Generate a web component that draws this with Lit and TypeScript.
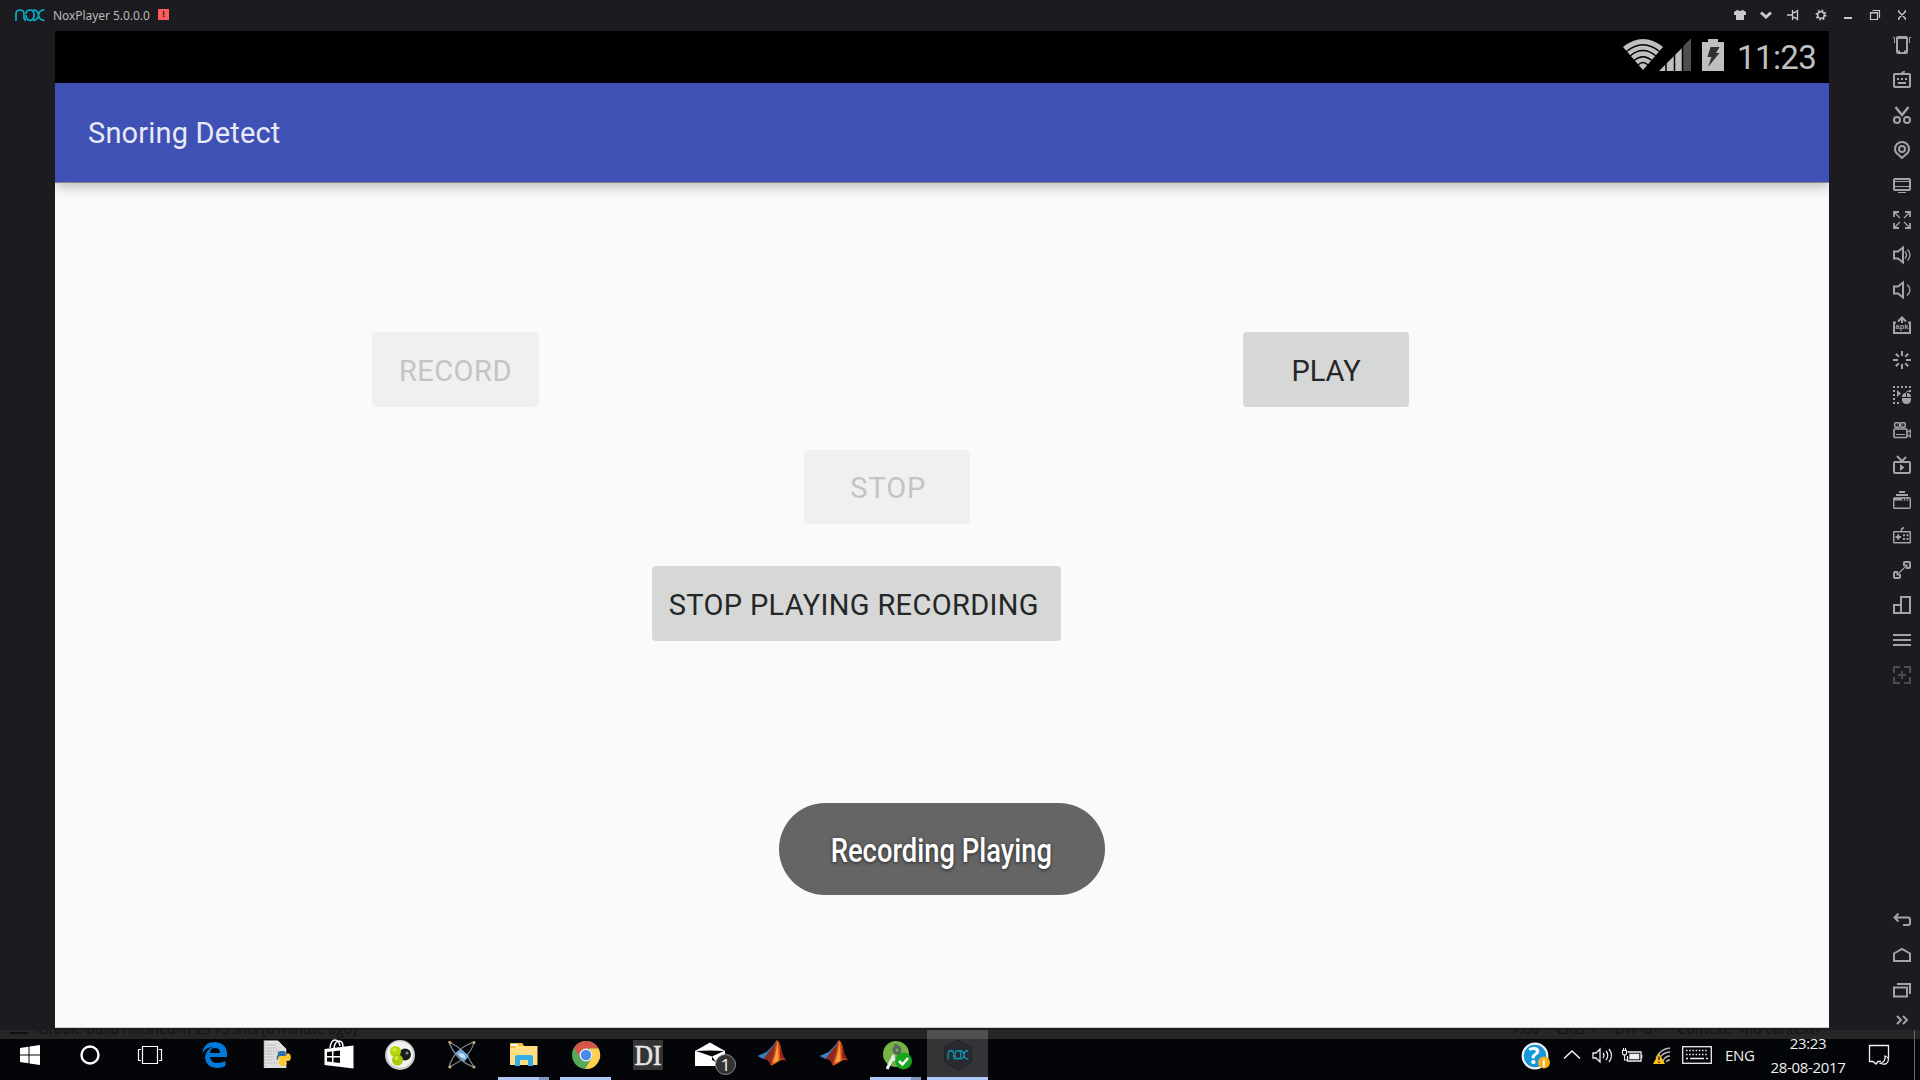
import { LitElement, html, css, svg } from "lit";
import { customElement } from "lit/decorators.js";

const noxMark = svg`<path d="M1 12V5Q1 1 5 1Q9 1 9 5V8Q9 11 11 11.2M11 5Q11 1 15 1Q19 1 19 6Q19 11.3 15 11.3Q11 11.3 11 6M18 1Q23 1 23.5 6Q24 11.3 29.5 11.3M29.5 1Q24 1 23.5 6Q23 11.3 18 11.3" fill="none" stroke-width="1.7"/>`;

const S = (body: unknown, w = 18, h = 18, cls = "") =>
  html`<svg class=${cls} width=${w} height=${h} viewBox="0 0 ${w} ${h}">${body}</svg>`;

const windowIcons = [
  svg`<path d="M3 6L6.5 3.8Q9 6.2 11.5 3.8L15 6V9H13V14H5V9H3Z" class="f"/>`,
  svg`<path d="M3 6.500L8 11L13 6.500" stroke-width="3"/>`,
  svg`<path d="M2 9H7M7.500 4V14M8 6.500H10L12.500 4.500V13.500L10 11.500H8" stroke-width="1.300"/>`,
  svg`<circle cx="9" cy="9" r="3.3" stroke-width="1.5"/><circle cx="9" cy="9" r="4.6" stroke-width="1.8" stroke-dasharray="1.6 2.01"/>`,
  svg`<path d="M5 12H13" stroke-width="2"/>`,
  svg`<path d="M4.5 7H11.5V13.5H4.5ZM4 6.5H12M6.500 4.500H13.500V12" stroke-width="1.2"/>`,
  svg`<path d="M5.500 5.500L12.500 12.500M12.500 5.500L5.500 12.500M5 5H6.500M5 13H6.500M11.500 5H13M11.500 13H13" stroke-width="1.4"/>`,
];

const speaker = svg`<path d="M1 5.500H5L10 1.500V16.500L5 12.500H1Z"/>`;

const sideIcons = [
  svg`<rect x="4" y="1" width="10" height="16" rx="1"/><path d="M4 2H14M4 15.500H7M11 15.500H14"/><path d="M0 1.500H1.500V7M18 1.500H16.500V7" stroke-width="1"/>`,
  svg`<rect x="1" y="3" width="16" height="13" rx="1"/><path d="M4 8H6M8 8H10M12 8H14M5 12H13"/><path d="M9 3V1.500L12 .5" stroke-width="1.500"/>`,
  svg`<path d="M2.500 1L9 9L15.500 1" stroke-width="2.400"/><circle cx="4" cy="14" r="3"/><circle cx="14" cy="14" r="3"/>`,
  svg`<path d="M9 17L5.500 13.700Q2 11.600 2 8A7 7 0 0 1 16 8Q16 11.600 12.500 13.700Z"/><circle cx="9" cy="8" r="3"/>`,
  svg`<rect x="1" y="3" width="16" height="11" rx="1"/><path d="M1 5.500H17M1 10.500H17M5 16.500H13" stroke-width="1"/>`,
  svg`<path d="M1 6V1H6M12 1H17V6M17 12V17H12M6 17H1V12" stroke-width="1.800"/><path d="M1 1L7 7M17 1L11 7M17 17L11 11M1 17L7 11" stroke-width="1.300"/>`,
  svg`${speaker}<path d="M12 5.500Q15 9 12 12.500M14.500 3.500Q19.500 9 14.500 14.500" stroke-width="1.300"/>`,
  svg`${speaker}<path d="M14 3.500Q20 9 14 14.500" stroke-width="1.300"/>`,
  svg`<path d="M3 6.500H1V17H17V6.500H15"/><path d="M9 7V1.500M5 5.500L9 1.500L13 5.500"/><text x="9" y="13" text-anchor="middle" class="apk">apk</text>`,
  svg`<path d="M9 0V5M9 13V18M0 9H5M13 9H18M2.800 2.800L5.800 5.800M12.200 12.200L15.200 15.200M15.200 2.800L12.200 5.800M5.800 12.200L2.800 15.200"/>`,
  svg`<path d="M0 1H18" stroke-dasharray="2 2"/><path d="M1 4V18M17 4V6" stroke-dasharray="2 2"/><path d="M4 17H6" /><path class="f" d="M4 4L8 7.500L4 11ZM9 11Q9 7 13 7V11ZM14 11V7Q18 7 18 11ZM9 12H18V14Q17.500 18 13.500 18T9 14Z"/><path d="M13 7Q13 5.500 16 5" stroke-width="1"/>`,
  svg`<rect x="1.700" y="1.700" width="5" height="4.500" rx="1" stroke-width="1.500"/><rect x="7.700" y="1.700" width="4.500" height="4.500" rx="1" stroke-width="1.500"/><rect x="1" y="8" width="13" height="8.500" rx="1" stroke-width="1.700"/><path d="M4 4H5M9.500 4H10.500M3 13.500H12M15 11L17.300 9V16L15 14" stroke-width="1.200"/>`,
  svg`<rect x="1" y="6" width="16" height="11" rx="1"/><path d="M4 0L9 5L13 1"/><path class="f" d="M7 8L11.500 11.500L7 15Z"/>`,
  svg`<path d="M6 1H12M3 4H15"/><rect x=".7" y="7" width="16.600" height="10.300" rx="1" stroke-width="1.400"/><path d="M1 8H17" stroke-width="3"/><path d="M9 8.500H11M12 8.500H14M15 8.500H16.500" class="cut" stroke-width="1.500"/>`,
  svg`<rect x=".7" y="5.700" width="16.600" height="11" rx=".5" stroke-width="1.500"/><path d="M8.500 5V3L11 1.500" stroke-width="1.500"/><path d="M2.500 11H8M5.200 8.200V13.800M10 9.200H12M13.500 9.200H15.500M10 13H12M13.500 13H15.500"/>`,
  svg`<path d="M11 5V1.500Q11 1 12 1H16Q17 1 17 2V6Q17 7 16 7H13M7 13V16Q7 17 6 17H2Q1 17 1 16V12Q1 11 2 11H5"/><path d="M4 14L14 4M10.500 4H14V7.500M4 10.500V14H7.500" stroke-width="1.200"/>`,
  svg`<path d="M8 17V1H17V17H1V9H8"/>`,
  svg`<path d="M0 4H18M0 9H18M0 14H18"/>`,
  svg`<path d="M1 7V1H7M11 1H17V7M17 11V17H11M7 17H1V11M9 5V13M5 9H13" class="dim"/>`,
];

const navIcons = [
  svg`<path d="M5.500 2.500L1.500 6.500L5.500 10.500M1 6.500H15Q17 6.500 17 8.500V12Q17 14 15 14H10"/>`,
  svg`<path d="M1 7.500V15H17V7.500L9 3Z"/>`,
  svg`<path d="M1 6.500H14V15.500H1ZM4 3H17V13"/>`,
];

const python = svg`<path d="M3 2H17L25 10V29H3Z" fill="#dedede"/><path d="M3 2H17L25 10V29" fill="none" stroke="#f6f6f6"/><path d="M6 6H14M6 9H16M6 12H18M6 15H13M6 18H13M6 21H13M6 24H16M4 2V29" stroke="#b4b4b4" stroke-dasharray="2 1"/><path d="M17 19V14Q17 12 20 12H23Q25 12 25 14V18H20Q17 18 17 21H16Q15 16 18 16H22" fill="#2f6fa8"/><path d="M17 20Q17 17 20 17H24Q26 17 26 14.500H28Q30 15 30 18.500Q30 22 27 22H24V23.500H26V25Q25 27 22 27T18 25V22Q18 20 21 20" fill="#fbc92d"/>`;
const matlab = svg`<g transform="translate(1.500 0)"><path d="M0 17L9 13L14 8Q17 5 19 1L17 20L11 17L6 20Z" fill="#3a7fc0"/><path d="M6 20L14 9Q18 6 19 1L21 12L13 26Q11 20 6 20Z" fill="#8c2c20"/><path d="M13 27Q17 15 19 1Q22 1 24 11T30 23Q26 19 22 22T13 27Z" fill="#d9501e"/><path d="M15 24Q19 15 20 2Q21 10 21 22Z" fill="#f9a23b"/><path d="M22 4Q24 15 29 22Q25 18 23 20Z" fill="#8b2119"/></g>`;

const apps = [
  { icon: svg`<path d="M4.500 15Q5 3 17 3Q29 4 29 15V18H12Q13 24 19 24Q24 24 27.500 22V27Q23 29.500 18 29Q8 28 7 19Q7 11 15 8Q7 8 4.500 15ZM12 14H22Q22 9 17 9T12 14Z" fill="#0279d8" fill-rule="evenodd"/>` },
  { icon: svg`<g transform="translate(.8 0)">${python}</g>` },
  { icon: svg`<path d="M2.500 10L31.500 6.500V29.500L2.500 26Z" fill="#fff"/><path d="M8 9Q9 1 13 1Q17 1 18 7M12 9Q13 2 17 2T21 8" fill="none" stroke="#fff" stroke-width="1.500"/><path d="M5 13L10 12.500V17H5ZM11.500 12.300L18 11.500V17H11.500ZM5 18.500H10V23L5 22.500ZM11.500 18.500H18V24L11.500 23.200Z" fill="#05070b"/>` },
  { icon: svg`<circle cx="16" cy="16" r="15" fill="#c9cac8"/><circle cx="16" cy="15.500" r="13" fill="#f3f3f2"/><circle cx="21" cy="15.500" r="6" fill="#181c1c"/><circle cx="11.500" cy="12.500" r="5.500" fill="#b8d60a"/><circle cx="13.500" cy="21" r="5.500" fill="#a8c80c"/><circle cx="10.500" cy="11" r="2" fill="#d4e83f"/><circle cx="12.500" cy="19" r="2" fill="#d4e83f"/><circle cx="23" cy="14" r="1.500" fill="#7f8c94"/>` },
  { icon: svg`<g fill="none" stroke="#898b89" stroke-width="1.200"><path d="M3 3Q19 10 28 28Q10 22 3 3ZM28 3Q25 18 3 28Q8 10 28 3Z"/></g><path d="M9 14L15 10L23 17L18 23Z" fill="#6ea7d9"/><path d="M12 14L18 15L20 20L14 18Z" fill="#c4e0f6"/><g fill="#d5a36a"><circle cx="4" cy="3.500" r="1.500"/><circle cx="28" cy="3.500" r="1.500"/><circle cx="4" cy="28" r="1.500"/><circle cx="28" cy="28" r="1.500"/></g>` },
  { icon: svg`<path d="M2 4H14L16 7H29.500V26H2Z" fill="#ffdf82"/><path d="M2 4H14L16 7H8L7 9H2Z" fill="#f2bd3a"/><path d="M3 5H10V7H3Z" fill="#e9f5fa"/><path d="M7 27V18Q7 16 9 16H23Q25 16 25 18V27H20V21H12V27Z" fill="#35aee5"/>`, on: "split" },
  { icon: svg`<circle cx="16" cy="16" r="14" fill="#55a95a"/><path d="M4 9A14 14 0 0 1 28.500 9.500H16A6.500 6.500 0 0 0 10 18Z" fill="#d6544a"/><path d="M28.500 9.500A14 14 0 0 1 15 30L21.500 19.500Q24 14 19 9.500Z" fill="#fdcf4c"/><circle cx="16" cy="16" r="6.500" fill="#f3f5f6"/><circle cx="16" cy="16" r="5.200" fill="#4a88ef"/>`, on: "full" },
  { icon: svg`<rect x="1" y="1" width="30" height="30" fill="#343434"/><text x="16" y="26" text-anchor="middle" class="di" textLength="27" lengthAdjust="spacingAndGlyphs">DI</text>` },
  { icon: svg`<path d="M1 12L16 3.500L31 12V27H1Z" fill="#fff"/><path d="M2 12L16 11.500L30 12L18 17.500ZM18 17.500L22 23L18 21Z" fill="#05070b"/><circle cx="31.500" cy="25.500" r="10" fill="#333" stroke="#8c8c8c"/><text x="31.500" y="31.500" text-anchor="middle" class="badge">1</text>` },
  { icon: matlab },
  { icon: matlab },
  { icon: svg`<circle cx="16" cy="15" r="13" fill="#77b344"/><circle cx="17" cy="11" r="3" fill="none" stroke="#5c6660" stroke-width="3"/><path d="M16 5V8M18 14L20 18" stroke="#5c6660" stroke-width="3"/><path d="M14 16L7 30M12 20L17 21" stroke="#ececec" stroke-width="3"/><circle cx="23.500" cy="22" r="8.500" fill="#16a51b"/><path d="M19 22L22.500 25.500L28 19" fill="none" stroke="#fff" stroke-width="2.500"/>`, on: "split" },
  { icon: svg`<path d="M16 1L29.500 8V23L16 31L2.500 23V8Z" fill="#292a31" stroke="#22232a"/><g transform="translate(5.500 11) scale(.7 .8)" stroke="#0d9cb0">${noxMark}</g>`, on: "current" },
];

const base = css`
  :host { display: block; }
  svg { display: block; flex: none; overflow: visible; }
  .line svg { fill: none; stroke: #a4a4a6; stroke-width: 2; }
  .line .f { fill: #a4a4a6; stroke: none; }
`;

@customElement("nox-titlebar")
class NoxTitlebar extends LitElement {
  static styles = [base, css`
    .bar { height: 31px; display: flex; align-items: center; background: #1c1b20; padding: 0 4.5px 1px 15px; box-sizing: border-box; }
    .logo { stroke: #05b1ca; }
    .name { margin: 1px 0 0 8px; width: 105px; font: 12px/16px "Noto Sans", sans-serif; color: #b9b9bb; white-space: nowrap; letter-spacing: -0.05px; }
    .alert { width: 11px; height: 11px; margin-top: -1px; background: #fb5c5e; color: #2c1518; font: bold 9px/11px "Liberation Sans", sans-serif; text-align: center; }
    .controls { margin-left: auto; display: flex; }
    .cell { width: 27px; display: flex; justify-content: center; }
    .controls svg { stroke: #cacacc; }
    .controls .f { fill: #cacacc; }
  `];
  render() {
    return html`<div class="bar">
      ${S(noxMark, 30, 12, "logo")}<span class="name">NoxPlayer 5.0.0.0</span><span class="alert">!</span>
      <div class="controls line">${windowIcons.map((i) => html`<div class="cell">${S(i)}</div>`)}</div>
    </div>`;
  }
}

@customElement("nox-sidebar")
class NoxSidebar extends LitElement {
  static styles = [base, css`
    :host { width: 91px; }
    .side { height: 100%; box-sizing: border-box; display: flex; flex-direction: column; align-items: flex-end; padding-right: 9px; }
    .cell { height: 35px; display: flex; align-items: center; }
    .tools { margin-top: -3.5px; }
    .nav { margin-top: auto; }
    .more { height: 25px; display: flex; align-items: center; padding-right: 3px; margin-bottom: -2px; }
    .apk { font: bold 7.500px "Liberation Mono", monospace; fill: #a4a4a6; stroke: none; }
    .cut { stroke: #1c1b20; }
    .dim { stroke: #4c4b50; }
  `];
  render() {
    return html`<div class="side line">
      <div class="tools">${sideIcons.map((i) => html`<div class="cell">${S(i)}</div>`)}</div>
      <div class="nav">${navIcons.map((i) => html`<div class="cell">${S(i)}</div>`)}</div>
      <div class="more">${S(svg`<path d="M1 1L5 5L1 9M7 1L11 5L7 9"/>`, 12, 10)}</div>
    </div>`;
  }
}

@customElement("android-screen")
class AndroidScreen extends LitElement {
  static styles = [base, css`
    :host { width: 1774px; position: relative; background: #fafafa; font-family: Roboto, sans-serif; }
    .status { height: 51.5px; box-sizing: border-box; background: #000; display: flex; align-items: flex-start; justify-content: flex-end; padding: 8px 13px 0 0; fill: #bfbfbf; }
    .signal { margin-left: -4px; }
    .battery { margin-left: 11px; }
    .clock { margin: 1px 0 0 13px; width: 79px; color: #bfbfbf; font-size: 33px; line-height: 36px; letter-spacing: -0.6px; white-space: nowrap; }
    .appbar { height: 99.500px; box-sizing: border-box; padding: 2px 0 0 33px; background: #3f51b5; display: flex; align-items: center; color: #e8eaf6; font-size: 29px; letter-spacing: .17px; box-shadow: 0 1px 0 #858585, 0 3px 13px rgba(0,0,0,.32); clip-path: inset(0 0 -22px 0); }
    .row { display: flex; }
    .first { padding: 150px 0 0 317.300px; gap: 704.300px; }
    .second { padding: 43px 0 0 748.700px; }
    .third { padding: 41.700px 0 0 597.300px; }
    .btn { width: 166.300px; height: 74.700px; box-sizing: border-box; padding-top: 2.500px; border-radius: 4px; background: #d6d8d7; color: #252626; font-size: 29px; display: flex; align-items: center; justify-content: center; white-space: nowrap; }
    .off { background: #f0f0f0; color: #c4c4c4; }
    .record { letter-spacing: .5px; }
    .stop { letter-spacing: .9px; padding-left: 3px; }
    .wide { width: 409px; letter-spacing: .34px; padding-right: 6px; }
    .toast { position: absolute; left: 723.700px; top: 772px; width: 326px; height: 92px; box-sizing: border-box; padding-top: 3px; border-radius: 46px; background: #656565; color: #fff; font-size: 33px; font-weight: 500; display: flex; align-items: center; justify-content: center; text-shadow: 0 1px 4px #222; white-space: nowrap; }
    .condensed { transform: scaleX(.83); }
  `];
  render() {
    return html`
      <div class="status">
        ${S(svg`<path d="M0 8Q20-8 40 8L20 31Z"/><path d="M3.500 12.500Q20-1 36.500 12.500M7 17Q20 6 33 17M11 21.500Q20 14 29 21.500M15 26Q20 21 25 26" fill="none" stroke="#000" stroke-width="1.400"/>`, 40, 32)}
        ${S(svg`<path d="M0 32L32 0V32Z"/><path d="M24 8L32 0V32H24Z" fill="#4e4e4e"/><path d="M7 20V32M15.500 12V32M23.500 5V32" stroke="#000" stroke-width="1.500"/>`, 32, 32, "signal")}
        ${S(svg`<path d="M0 3H6V0H16V3H22V32H0Z"/><path d="M8.500 8H17.500L14 14H17.500L6 28L9.500 18H5.500Z" fill="#303030"/>`, 22, 32, "battery")}
        <span class="clock">11:23</span>
      </div>
      <div class="appbar"><span>Snoring Detect</span></div>
      <div class="row first"><div class="btn off record">RECORD</div><div class="btn">PLAY</div></div>
      <div class="row second"><div class="btn off stop">STOP</div></div>
      <div class="row third"><div class="btn wide">STOP PLAYING RECORDING</div></div>
      <div class="toast"><span class="condensed">Recording Playing</span></div>`;
  }
}

@customElement("win-taskbar")
class WinTaskbar extends LitElement {
  static styles = [base, css`
    :host { height: 50px; }
    .bar { height: 50px; position: relative; background: linear-gradient(#262626 9px, #030509 9px); display: flex; overflow: hidden; color: #f0f0f0; }
    .behind { position: absolute; left: 10px; right: 0; top: -10px; height: 18px; display: flex; font: 14.200px/18px "Open Sans", sans-serif; color: #111; white-space: nowrap; }
    .lines { width: 18px; height: 10px; border-bottom: 2px solid #111; border-top: 2px solid #111; margin-right: 10px; }
    .info { margin-left: auto; display: flex; gap: 17px; padding-right: 97px; }
    .sys, .apps, .tray { position: relative; display: flex; }
    .sys .cell { width: 60px; display: flex; align-items: center; justify-content: center; }
    .apps { margin-left: 3px; gap: 1px; }
    .app { width: 61px; height: 50px; display: flex; justify-content: center; align-items: center; position: relative; }
    .split::after, .full::after, .current::after { content: ""; position: absolute; left: 5px; right: 5px; bottom: 0; height: 3px; background: #afc8f8; }
    .split::after { background: linear-gradient(90deg, #afc8f8 41px, #8298c0 41px); }
    .current { background: linear-gradient(#505050 9px, #333436 9px); }
    .current::after { left: 0; right: 0; }
    .di { font: 29px "Liberation Serif", serif; fill: #e6e6e6; stroke: #e6e6e6; stroke-width: .6; }
    .badge { font: 17px "Open Sans", sans-serif; fill: #fff; }
    .tray { margin-left: auto; align-items: center; font: 15px/20px "Open Sans", sans-serif; }
    .help { margin: 2px 7px 0 0; }
    .q { font: bold 23px "Open Sans", sans-serif; fill: #fff; }
    .i { font: bold 11px "Open Sans", sans-serif; fill: #fff; }
    .ic { width: 30px; display: flex; justify-content: center; }
    .kb { width: 40px; }
    .lang { width: 30px; margin-left: 8px; letter-spacing: -.3px; }
    .when { width: 76px; margin-left: 15px; text-align: center; line-height: 24px; white-space: nowrap; letter-spacing: -.35px; }
    .note { margin-left: 23px; }
    .desk { width: 6px; height: 50px; margin-left: 25px; border-left: 1px solid #66686a; box-sizing: border-box; }
    .tray .ic svg, .note { fill: none; stroke: #f0f0f0; stroke-width: 1.300; }
  `];
  render() {
    return html`<div class="bar">
      <div class="behind"><span class="lines"></span><span>Gradle build finished in 2s 759ms (a minute ago)</span>
        <span class="info"><span>7:00</span><span>CRLF÷</span><span>UTF-8÷</span><span>Context: &lt;no context&gt;</span></span></div>
      <div class="sys">
        <div class="cell">${S(svg`<path d="M0 3L8.500 1.800V9.500H0ZM9.500 1.600L20 0V9.500H9.500ZM0 10.500H8.500V18.200L0 17ZM9.500 10.500H20V20L9.500 18.400Z" fill="#fff"/>`, 20, 20)}</div>
        <div class="cell">${S(svg`<circle cx="10" cy="10" r="8.500" fill="none" stroke="#fff" stroke-width="2.400"/>`, 20, 20)}</div>
        <div class="cell">${S(svg`<path d="M4.500 1.500H19.500V18.500H4.500ZM3 4.500H.5V15.500H3M21 4.500H23.500V15.500H21" fill="none" stroke="#fff" stroke-width="1.200"/>`, 24, 20)}</div>
      </div>
      <div class="apps">${apps.map((a) => html`<div class="app ${a.on ?? ""}">${S(a.icon, 32, 32)}</div>`)}</div>
      <div class="tray">
        ${S(svg`<circle cx="14" cy="14" r="12.300" fill="#1496db" stroke="#f2f2f2" stroke-width="2.200"/><text x="13" y="22" text-anchor="middle" class="q">?</text><circle cx="23" cy="20.500" r="6" fill="#f4ae1d"/><text x="23" y="24.500" text-anchor="middle" class="i">i</text>`, 29, 28, "help")}
        <div class="ic">${S(svg`<path d="M1 10.500L9 3L17 10.500" stroke-width="1.600"/>`, 18, 14)}</div>
        <div class="ic">${S(svg`<path d="M1 6H4L8 2V15L4 11H1ZM11 6Q13 8.500 11 11M14 4Q17.500 8.500 14 13M17 2Q22 8.500 17 15"/>`, 20, 17)}</div>
        <div class="ic">${S(svg`<path d="M5.500 4H19V13H5.500V8"/><rect x="7.300" y="5.700" width="10" height="5.600" fill="#f0f0f0" stroke="none"/><path d="M19.800 6.500V10.500M.5 2.500H4.500V5Q4.500 7 2.500 7T.5 5ZM1.500 0V2.500M3.500 0V2.500M2.500 7V12H5.500" stroke-width="1.100"/>`, 20, 15)}</div>
        <div class="ic">${S(svg`<path d="M3 11Q7 2 17 1M6 12Q10 5 17 5M10 14Q12 9 17 9M13 15Q14 13 17 13" stroke="#b8b8b8"/><path d="M6 6L12 17H0Z" fill="#fcbf15" stroke="none"/><path d="M6 9.500V13M6 14.500V16" stroke="#111"/>`, 18, 17)}</div>
        <div class="ic kb">${S(svg`<rect x=".7" y=".7" width="28.600" height="16.600"/><path d="M4 4.500H26M4 8.500H26" stroke-dasharray="1.500 1.700"/><path d="M4 12.500H6M8 12.500H22M24 12.500H26"/>`, 30, 18)}</div>
        <span class="lang">ENG</span>
        <div class="when"><div>23:23</div><div>28-08-2017</div></div>
        ${S(svg`<path d="M12 16.500H9L7 19L4 16.500H.5V.5H19.500V13"/><path d="M16 11Q17 16 11.500 18.500Q19 21 19.500 14Q19 12 16 11Z"/>`, 20, 20, "note")}
        <span class="desk"></span>
      </div>
    </div>`;
  }
}

@customElement("app-root")
class AppRoot extends LitElement {
  static styles = [base, css`
    :host { width: 1920px; height: 1080px; overflow: hidden; background: #1c1b20; }
    .body { height: 999px; display: flex; padding-left: 55px; box-sizing: border-box; }
    .screen { height: 996.500px; border-bottom: 1px solid #cfcfcf; box-sizing: border-box; }
  `];
  render() {
    return html`<nox-titlebar></nox-titlebar>
      <div class="body"><android-screen class="screen"></android-screen><nox-sidebar></nox-sidebar></div>
      <win-taskbar></win-taskbar>`;
  }
}
